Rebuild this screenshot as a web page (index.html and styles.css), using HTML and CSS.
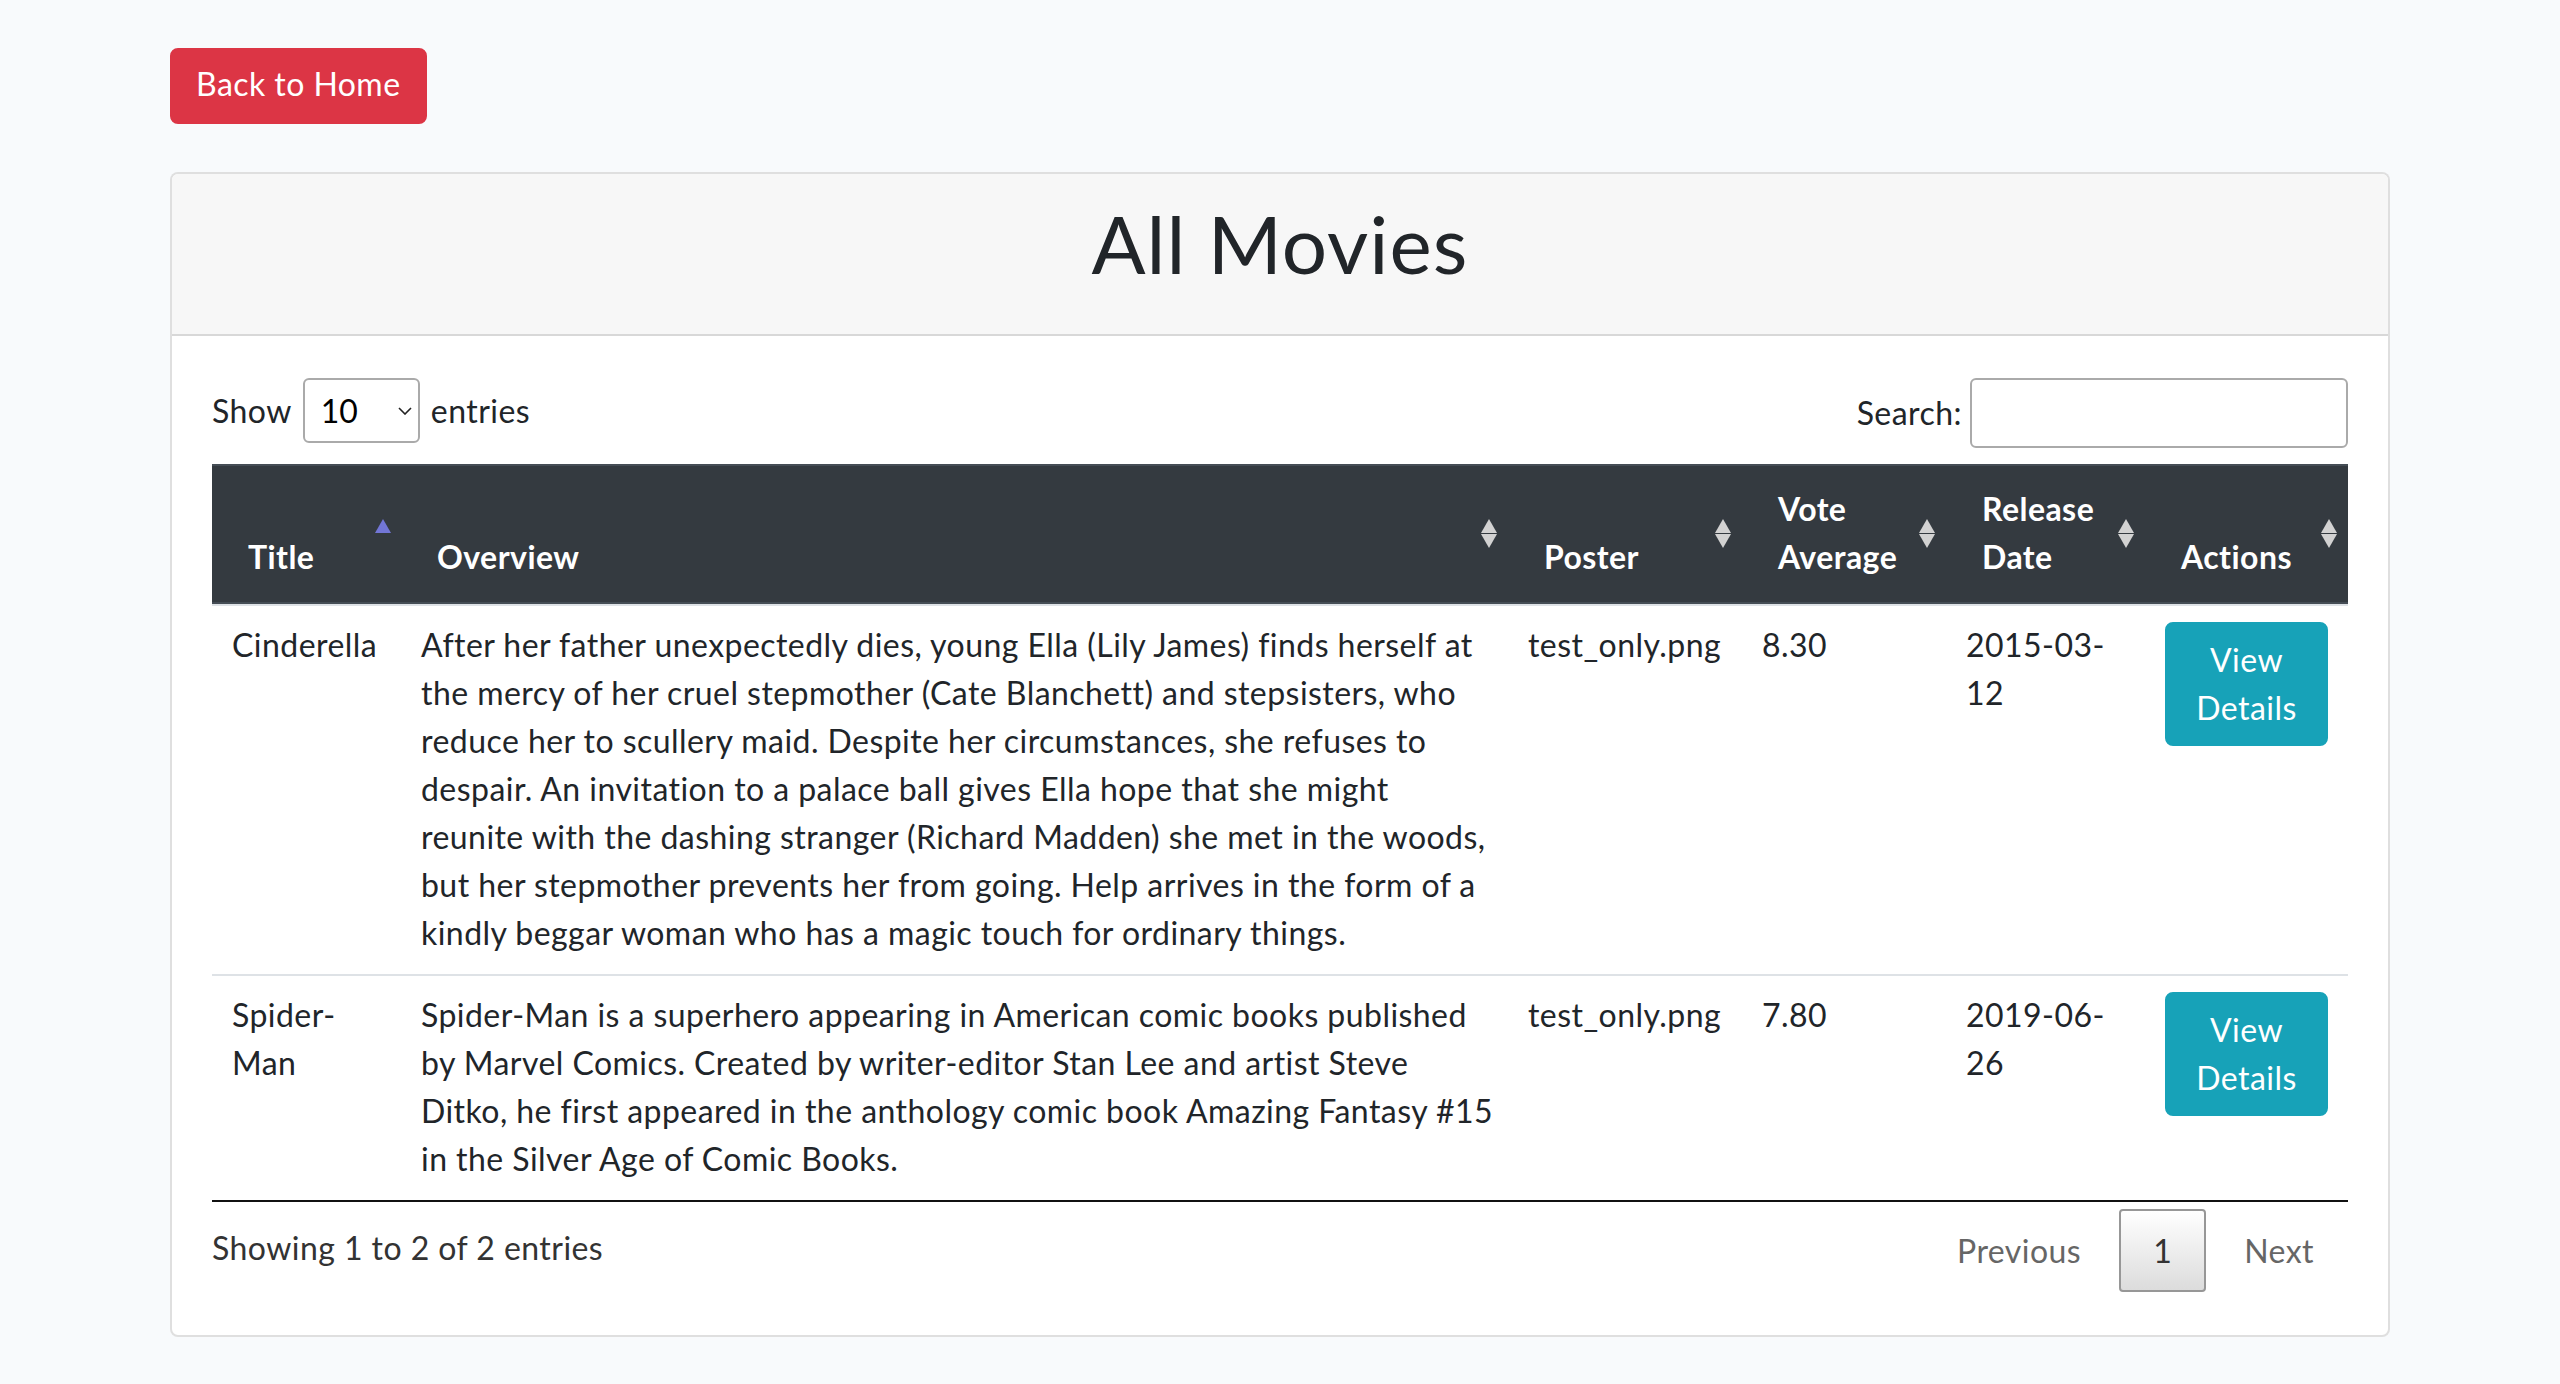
FILE: index.html
```html
<!DOCTYPE html>
<html lang="en">
<head>
<meta charset="utf-8">
<title>All Movies</title>
<link rel="stylesheet" href="styles.css">
</head>
<body>
<div class="container">
  <div class="top-actions">
    <a class="btn btn-danger" href="#">Back to Home</a>
  </div>
  <div class="card">
    <div class="card-header">
      <h1 class="card-title">All Movies</h1>
    </div>
    <div class="card-body">
      <div class="dt-top">
        <label class="dt-length">Show
          <span class="select-wrap">
            <select><option>10</option><option>25</option><option>50</option><option>100</option></select>
            <svg class="chev" width="14" height="8" viewBox="0 0 14 8"><path d="M1 1 L7 7 L13 1" fill="none" stroke="#222" stroke-width="1.6"/></svg>
          </span>
          entries</label>
        <label class="dt-filter">Search:<input type="search"></label>
      </div>
      <table class="dt">
        <colgroup>
          <col class="c-title"><col class="c-overview"><col class="c-poster"><col class="c-vote"><col class="c-date"><col class="c-actions">
        </colgroup>
        <thead>
          <tr>
            <th class="sorting-asc">Title</th>
            <th class="sorting">Overview</th>
            <th class="sorting">Poster</th>
            <th class="sorting">Vote Average</th>
            <th class="sorting">Release Date</th>
            <th class="sorting">Actions</th>
          </tr>
        </thead>
        <tbody>
          <tr>
            <td>Cinderella</td>
            <td class="overview">After her father unexpectedly dies, young Ella (Lily James) finds herself at<br>the mercy of her cruel stepmother (Cate Blanchett) and stepsisters, who<br>reduce her to scullery maid. Despite her circumstances, she refuses to<br>despair. An invitation to a palace ball gives Ella hope that she might<br>reunite with the dashing stranger (Richard Madden) she met in the woods,<br>but her stepmother prevents her from going. Help arrives in the form of a<br>kindly beggar woman who has a magic touch for ordinary things.</td>
            <td>test_only.png</td>
            <td>8.30</td>
            <td>2015-03-12</td>
            <td><a class="btn btn-info" href="#">View Details</a></td>
          </tr>
          <tr>
            <td>Spider-Man</td>
            <td class="overview">Spider-Man is a superhero appearing in American comic books published<br>by Marvel Comics. Created by writer-editor Stan Lee and artist Steve<br>Ditko, he first appeared in the anthology comic book Amazing Fantasy #15<br>in the Silver Age of Comic Books.</td>
            <td>test_only.png</td>
            <td>7.80</td>
            <td>2019-06-26</td>
            <td><a class="btn btn-info" href="#">View Details</a></td>
          </tr>
        </tbody>
      </table>
      <div class="dt-bottom">
        <div class="dt-info">Showing 1 to 2 of 2 entries</div>
        <div class="dt-paginate">
          <a class="pg disabled">Previous</a>
          <a class="pg current">1</a>
          <a class="pg disabled">Next</a>
        </div>
      </div>
    </div>
  </div>
</div>
</body>
</html>
```

FILE: styles.css
```css
* { box-sizing: border-box; }

body {
  margin: 0;
  background: #f8fafc;
  font-family: Lato, "Open Sans", sans-serif;
  font-size: 32px;
  line-height: 48px;
  letter-spacing: 0.45px;
  color: #212529;
}

.container {
  width: 2280px;
  margin: 0 auto;
  padding: 48px 30px 0;
}

.top-actions {
  display: flex;
}

.btn {
  display: inline-block;
  padding: 12px 24px;
  border: 2px solid transparent;
  border-radius: 8px;
  color: #fff;
  text-decoration: none;
  text-align: center;
  font-size: 32px;
  line-height: 48px;
}

.top-actions .btn {
  padding-top: 10px;
  padding-bottom: 14px;
}

.btn-danger {
  background: #dc3545;
  border-color: #dc3545;
}

.btn-info {
  background: #17a2b8;
  border-color: #17a2b8;
}

.card {
  margin-top: 48px;
  background: #fff;
  border: 2px solid rgba(0, 0, 0, 0.125);
  border-radius: 8px;
  overflow: hidden;
}

.card-header {
  background: #f7f7f7;
  border-bottom: 2px solid rgba(0, 0, 0, 0.125);
  padding: 21px 40px 24px;
}

.card-title {
  margin: 0 0 19px;
  text-align: center;
  font-size: 80px;
  line-height: 96px;
  font-weight: 400;
  letter-spacing: 1px;
}

.card-body {
  padding: 40px 40px 43px;
}

.dt-top {
  display: flex;
  justify-content: space-between;
  align-items: flex-start;
  height: 88px;
  padding-top: 2px;
}

.dt-length,
.dt-filter {
  display: flex;
  align-items: center;
}

.dt-length {
  gap: 11px;
}

.select-wrap {
  position: relative;
  display: inline-block;
}

.select-wrap select {
  appearance: none;
  -webkit-appearance: none;
  width: 117px;
  height: 65px;
  border: 2px solid #aaa;
  border-radius: 6px;
  padding: 0 0 0 16px;
  background: transparent;
  font-family: inherit;
  font-size: 32px;
  color: #000;
}

.chev {
  position: absolute;
  right: 8px;
  top: 29px;
}

.dt-filter input {
  width: 378px;
  height: 70px;
  margin-left: 8px;
  border: 2px solid #aaa;
  border-radius: 6px;
  background: transparent;
  font-size: 32px;
}

.dt {
  width: 100%;
  table-layout: fixed;
  border-collapse: separate;
  border-spacing: 0;
  border-bottom: 2px solid #111;
}

.c-title { width: 189px; }
.c-overview { width: 1107px; }
.c-poster { width: 234px; }
.c-vote { width: 204px; }
.c-date { width: 199px; }
.c-actions { width: 203px; }

.dt th {
  position: relative;
  background: #343a40;
  color: #fff;
  font-weight: 700;
  text-align: left;
  vertical-align: bottom;
  padding: 19px 36px 21px;
  border-top: 2px solid #454d55;
  border-bottom: 2px solid #454d55;
}

.dt th.sorting::before,
.dt th.sorting::after,
.dt th.sorting-asc::before {
  content: "";
  position: absolute;
  right: 11px;
  top: 50%;
  width: 0;
  height: 0;
  border-left: 8.5px solid transparent;
  border-right: 8.5px solid transparent;
}

.dt th.sorting::before {
  margin-top: -15px;
  border-bottom: 14px solid #d2d2d2;
}

.dt th.sorting::after {
  margin-top: 0;
  border-top: 14px solid #d2d2d2;
}

.dt th.sorting-asc::before {
  right: 10px;
  margin-top: -15px;
  border-bottom: 14px solid #7276d6;
}

.dt td {
  padding: 15px 20px 17px;
  vertical-align: top;
  border-top: 2px solid #dee2e6;
}

.dt td .btn {
  margin-top: 1px;
}

.dt td.overview {
  white-space: nowrap;
}

.dt-bottom {
  display: flex;
  justify-content: space-between;
  align-items: flex-start;
}

.dt-info {
  padding-top: 22px;
  color: #333;
}

.dt-paginate {
  display: flex;
  padding-top: 7px;
}

.pg {
  padding: 16px 32px;
  margin-left: 4px;
  border: 2px solid transparent;
  border-radius: 4px;
  color: #666;
  line-height: 47px;
}

.pg.current {
  border-color: #979797;
  background: linear-gradient(to bottom, #fff 0%, #dcdcdc 100%);
  color: #333;
}
```
